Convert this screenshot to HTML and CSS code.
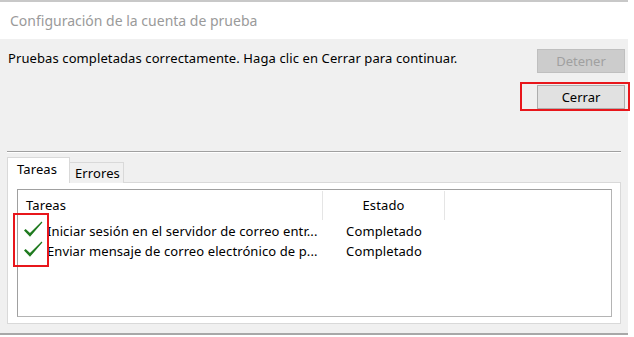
FILE: index.html
```html
<!DOCTYPE html>
<html lang="es">
<head>
    <meta charset="UTF-8">
    <meta name="viewport" content="width=device-width, initial-scale=1.0">
    <title>Configuración de la cuenta de prueba</title>
    <link rel="stylesheet" href="styles.css">
</head>
<body>
    <div class="dialog">
        <div class="titlebar">Configuración de la cuenta de prueba</div>

        <div class="content">
            <div class="top-row">
                <p class="message">Pruebas completadas correctamente. Haga clic en Cerrar para continuar.</p>
                <div class="buttons">
                    <button type="button" class="btn" disabled>Detener</button>
                    <button type="button" class="btn btn-close">Cerrar</button>
                </div>
            </div>

            <div class="separator"></div>

            <div class="tabs">
                <div class="tab active">Tareas</div>
                <div class="tab">Errores</div>
            </div>

            <div class="tab-panel">
                <div class="list">
                    <div class="list-head">
                        <div class="col col-task">Tareas</div>
                        <div class="col col-state">Estado</div>
                    </div>
                    <div class="list-row">
                        <div class="col col-task">
                            <svg class="check" width="20" height="17" viewBox="0 0 20 17">
                                <path d="M1 9.5 L2.6 8 L7 12 L18.6 0.6 L19.4 1.4 L7 15.8 Z" fill="#1f7a1f"/>
                            </svg>
                            <span>Iniciar sesión en el servidor de correo entr...</span>
                        </div>
                        <div class="col col-state">Completado</div>
                    </div>
                    <div class="list-row">
                        <div class="col col-task">
                            <svg class="check" width="20" height="17" viewBox="0 0 20 17">
                                <path d="M1 9.5 L2.6 8 L7 12 L18.6 0.6 L19.4 1.4 L7 15.8 Z" fill="#1f7a1f"/>
                            </svg>
                            <span>Enviar mensaje de correo electrónico de p...</span>
                        </div>
                        <div class="col col-state">Completado</div>
                    </div>
                </div>
            </div>
        </div>

        <!-- marcas rojas de la captura -->
        <div class="mark mark-close"></div>
        <div class="mark mark-checks"></div>
    </div>
</body>
</html>
```

FILE: styles.css
```css
body {
    margin: 0;
    background-color: #fff;
    font-family: "Noto Sans", "Open Sans", sans-serif;
    font-size: 13px;
    letter-spacing: 0.1px;
    color: #000;
}
.dialog {
    position: relative;
    width: 628px;
    border-top: 2px solid #c8c8c8;
    border-bottom: 2px solid #a8a8a8;
}
.titlebar {
    height: 37px;
    line-height: 37px;
    padding-left: 10px;
    background-color: #fff;
    color: #9a9a9a;
    font-size: 14px;
    letter-spacing: 0;
}
.content {
    background-color: #f0f0f0;
    padding: 10px 3px 8px 7px;
    height: 276px;
}
.top-row {
    display: flex;
    justify-content: space-between;
}
.message {
    margin: 0;
    padding-left: 1px;
    line-height: 18px;
}
.buttons {
    display: flex;
    flex-direction: column;
    gap: 12px;
}
.btn {
    width: 88px;
    height: 24px;
    font-family: inherit;
    font-size: 13px;
    color: #000;
    background-color: #e1e1e1;
    border: 1px solid #adadad;
    padding: 0;
}
.btn:disabled {
    background-color: #cccccc;
    border-color: #bfbfbf;
    color: #a0a0a0;
}
.separator {
    margin-top: 42px;
    margin-right: 4px;
    border-top: 1px solid #a0a0a0;
    border-bottom: 1px solid #fff;
}
.tabs {
    display: flex;
    align-items: flex-end;
    margin-top: 4px;
    height: 25px;
}
.tab {
    box-sizing: border-box;
    width: 54px;
    height: 21px;
    line-height: 20px;
    padding-left: 5px;
    background-color: #f0f0f0;
    border: 1px solid #d9d9d9;
    border-left: none;
    border-bottom: none;
    position: relative;
    top: 1px;
}
.tab.active {
    width: 63px;
    height: 26px;
    line-height: 22px;
    padding-left: 9px;
    border-left: 1px solid #d9d9d9;
    background-color: #fff;
    z-index: 1;
}
.tab-panel {
    background-color: #fff;
    border: 1px solid #d9d9d9;
    margin-right: 4px;
    height: 128px;
    padding: 6px 8px 6px 9px;
}
.list {
    height: 126px;
    border: 1px solid #a0a0a0;
    border-right-color: #b4b4b4;
    border-bottom-color: #b4b4b4;
}
.list-head, .list-row {
    display: flex;
}
.list-head {
    height: 31px;
    align-items: center;
}
.list-head .col {
    height: 29px;
    line-height: 29px;
    border-right: 1px solid #e5e5e5;
}
.list-row {
    height: 20px;
    line-height: 20px;
}
.col-task {
    width: 296px;
    padding-left: 8px;
    display: flex;
    align-items: center;
    white-space: nowrap;
}
.list-row .col-task {
    padding-left: 5px;
    width: 300px;
}
.check {
    flex: none;
    margin-right: 4px;
    margin-top: -3px;
}
.col-state {
    width: 121px;
    text-align: center;
}
.list-row .col-state {
    width: 122px;
}
.mark {
    position: absolute;
    border: 2px solid #e8161b;
}
.mark-close {
    left: 520px;
    top: 80px;
    width: 106px;
    height: 25px;
}
.mark-checks {
    left: 13px;
    top: 211px;
    width: 32px;
    height: 50px;
}
```
